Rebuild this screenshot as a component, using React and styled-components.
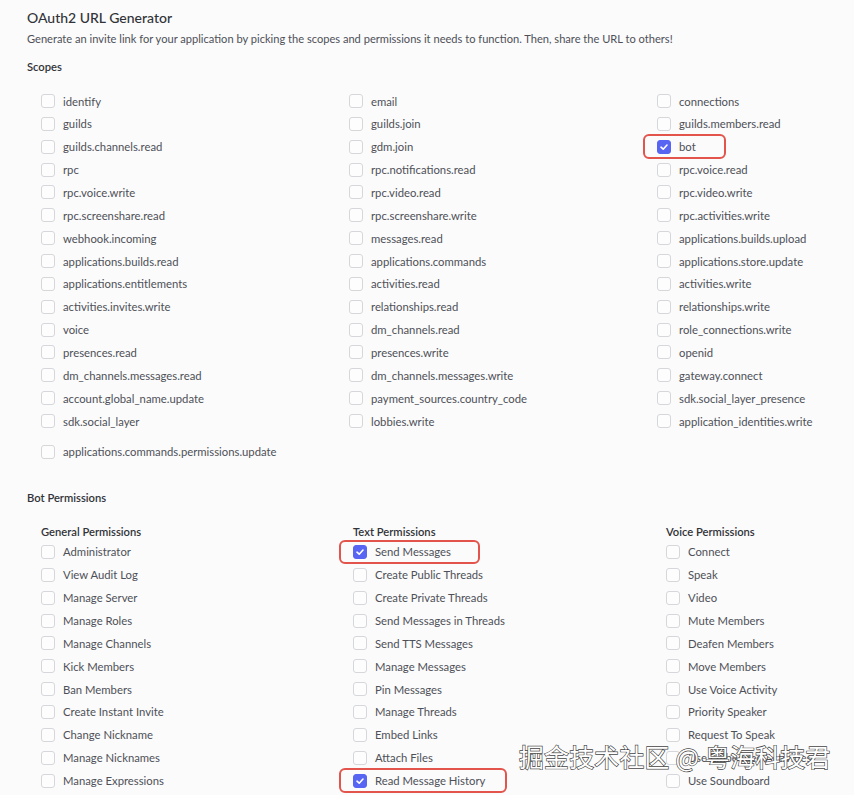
import React from 'react';
import styled, { createGlobalStyle } from 'styled-components';

const GlobalStyle = createGlobalStyle`
  html, body {
    margin: 0;
    padding: 0;
    background: #fbfbfb;
  }
  body {
    font-family: Lato, "Noto Sans", sans-serif;
    color: #4e5058;
  }
`;

const Page = styled.div`
  position: relative;
  padding: 8px 27px 0;
  height: 795px;
  box-sizing: border-box;
  overflow: hidden;
`;

const Title = styled.h1`
  margin: 0;
  font-size: 14px;
  line-height: 20px;
  font-weight: 500;
  color: #313338;
`;

const Description = styled.p`
  margin: 3px 0 0;
  font-size: 11.1px;
  line-height: 16px;
  color: #4e5058;
`;

const SectionTitle = styled.h2`
  margin: ${p => p.$top}px 0 0;
  font-size: 11.2px;
  line-height: 16px;
  font-weight: 600;
  color: #313338;
`;

const ScopeGrid = styled.div`
  margin-top: 14.6px;
  padding-left: 14px;
  display: grid;
  grid-template-columns: repeat(3, 308px);
  grid-auto-rows: 22.86px;
`;

const WideRow = styled.div`
  margin-top: 8px;
  padding-left: 14px;
  display: flex;
  align-items: center;
`;

const Cell = styled.div`
  display: flex;
  align-items: center;
`;

const Item = styled.label`
  position: relative;
  display: inline-flex;
  align-items: center;
  gap: 8px;
  height: 22.86px;
  font-size: 11.3px;
  color: #4e5058;
  white-space: nowrap;

  ${p => p.$highlight && `
    &::after {
      content: '';
      position: absolute;
      top: -1px;
      bottom: -1px;
      left: -14px;
      right: -${p.$extra || 26}px;
      border: 2px solid #e2544c;
      border-radius: 6px;
    }
  `}
`;

const Box = styled.span`
  width: 14px;
  height: 14px;
  box-sizing: border-box;
  border-radius: 3px;
  border: 1px solid ${p => (p.$checked ? '#5865f2' : '#d6d7db')};
  background: ${p => (p.$checked ? '#5865f2' : '#fdfdfd')};
  display: flex;
  align-items: center;
  justify-content: center;
  flex-shrink: 0;
`;

const PermGrid = styled.div`
  margin-top: 18px;
  padding-left: 14px;
  display: grid;
  grid-template-columns: 312px 313px 150px;
`;

const PermColumn = styled.div`
  display: flex;
  flex-direction: column;
`;

const ColumnTitle = styled.h3`
  margin: 0 0 0.6px;
  font-size: 11.2px;
  line-height: 16px;
  font-weight: 600;
  color: #313338;
`;

const Watermark = styled.div`
  position: absolute;
  left: 519px;
  top: 741px;
  font-family: "Noto Sans CJK SC", sans-serif;
  font-size: 24.8px;
  line-height: 30px;
  letter-spacing: 0.3px;
  color: #ffffff;
  -webkit-text-stroke: 1.3px #444;
  paint-order: stroke fill;
  white-space: nowrap;
  pointer-events: none;
`;

const Check = () => (
  <svg width="10" height="10" viewBox="0 0 10 10">
    <path d="M2 5.2 L4.2 7.2 L8 3" fill="none" stroke="#fff" strokeWidth="1.6" strokeLinecap="round" strokeLinejoin="round" />
  </svg>
);

const CheckItem = ({ label, checked, highlight, extra }) => (
  <Item $highlight={highlight} $extra={extra}>
    <Box $checked={checked}>{checked && <Check />}</Box>
    {label}
  </Item>
);

const scopes = [
  'identify', 'email', 'connections',
  'guilds', 'guilds.join', 'guilds.members.read',
  'guilds.channels.read', 'gdm.join', 'bot',
  'rpc', 'rpc.notifications.read', 'rpc.voice.read',
  'rpc.voice.write', 'rpc.video.read', 'rpc.video.write',
  'rpc.screenshare.read', 'rpc.screenshare.write', 'rpc.activities.write',
  'webhook.incoming', 'messages.read', 'applications.builds.upload',
  'applications.builds.read', 'applications.commands', 'applications.store.update',
  'applications.entitlements', 'activities.read', 'activities.write',
  'activities.invites.write', 'relationships.read', 'relationships.write',
  'voice', 'dm_channels.read', 'role_connections.write',
  'presences.read', 'presences.write', 'openid',
  'dm_channels.messages.read', 'dm_channels.messages.write', 'gateway.connect',
  'account.global_name.update', 'payment_sources.country_code', 'sdk.social_layer_presence',
  'sdk.social_layer', 'lobbies.write', 'application_identities.write',
];

const permissions = [
  {
    title: 'General Permissions',
    items: [
      'Administrator', 'View Audit Log', 'Manage Server', 'Manage Roles', 'Manage Channels',
      'Kick Members', 'Ban Members', 'Create Instant Invite', 'Change Nickname',
      'Manage Nicknames', 'Manage Expressions',
    ],
  },
  {
    title: 'Text Permissions',
    items: [
      { label: 'Send Messages', checked: true, highlight: true, extra: 29 },
      'Create Public Threads', 'Create Private Threads', 'Send Messages in Threads',
      'Send TTS Messages', 'Manage Messages', 'Pin Messages', 'Manage Threads',
      'Embed Links', 'Attach Files',
      { label: 'Read Message History', checked: true, highlight: true, extra: 22 },
    ],
  },
  {
    title: 'Voice Permissions',
    items: [
      'Connect', 'Speak', 'Video', 'Mute Members', 'Deafen Members', 'Move Members',
      'Use Voice Activity', 'Priority Speaker', 'Request To Speak',
      'Use Embedded Activities', 'Use Soundboard',
    ],
  },
];

const App = () => (
  <>
    <GlobalStyle />
    <Page>
      <Title>OAuth2 URL Generator</Title>
      <Description>
        Generate an invite link for your application by picking the scopes and permissions it needs to function. Then, share the URL to others!
      </Description>

      <SectionTitle $top={12}>Scopes</SectionTitle>
      <ScopeGrid>
        {scopes.map(s => (
          <Cell key={s}>
            {s === 'bot'
              ? <CheckItem label={s} checked highlight extra={30} />
              : <CheckItem label={s} />}
          </Cell>
        ))}
      </ScopeGrid>
      <WideRow>
        <CheckItem label="applications.commands.permissions.update" />
      </WideRow>

      <SectionTitle $top={26.6}>Bot Permissions</SectionTitle>
      <PermGrid>
        {permissions.map(col => (
          <PermColumn key={col.title}>
            <ColumnTitle>{col.title}</ColumnTitle>
            {col.items.map(it => {
              const item = typeof it === 'string' ? { label: it } : it;
              return (
                <Cell key={item.label}>
                  <CheckItem {...item} />
                </Cell>
              );
            })}
          </PermColumn>
        ))}
      </PermGrid>

      <Watermark>掘金技术社区 @ 粤海科技君</Watermark>
    </Page>
  </>
);

export default App;
